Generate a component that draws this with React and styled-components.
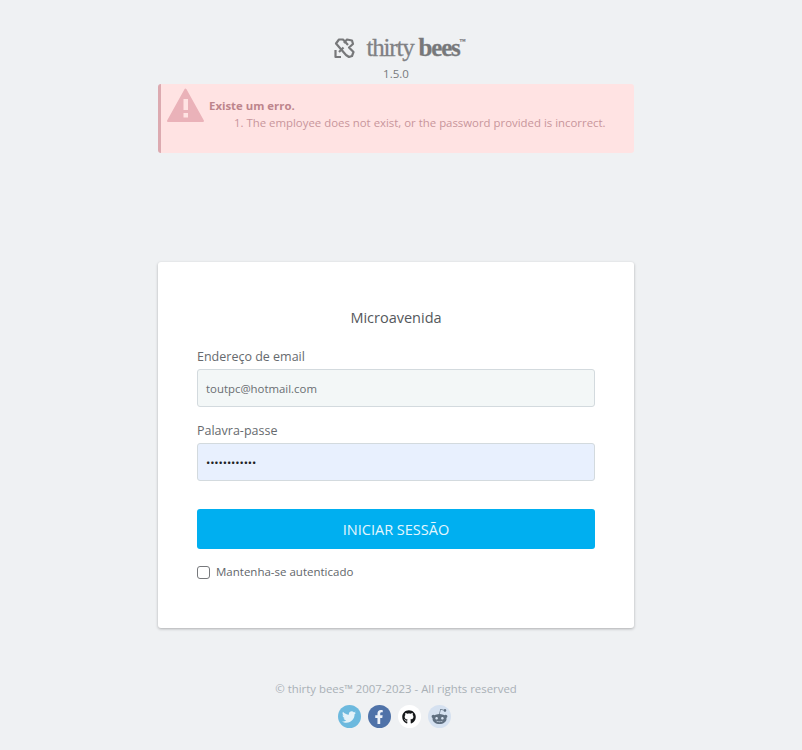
import React from "react";
import styled, { createGlobalStyle } from "styled-components";
import { FaTwitter, FaFacebookF, FaGithub, FaRedditAlien } from "react-icons/fa";

const GlobalStyle = createGlobalStyle`
  html, body {
    margin: 0;
    padding: 0;
    background: #eff1f3;
    font-family: "Open Sans", "Liberation Sans", sans-serif;
  }
  * { box-sizing: border-box; }
`;

const Page = styled.div`
  width: 792px;
  height: 750px;
  overflow: hidden;
  display: flex;
  flex-direction: column;
  align-items: center;
  padding-top: 36px;
`;

const Logo = styled.div`
  display: flex;
  align-items: center;
  height: 24px;
  gap: 12px;
  margin-left: 7px;
  color: #77787a;
`;

const LogoText = styled.div`
  font-family: "Liberation Serif", serif;
  font-size: 25px;
  line-height: 24px;
  letter-spacing: -1.2px;
  color: #808184;
  -webkit-text-stroke: 0.3px #808184;
  b {
    font-weight: 700;
    color: #77787a;
  }
  sup {
    font-size: 6px;
    vertical-align: 13px;
    line-height: 0;
    letter-spacing: 0;
  }
`;

const Version = styled.div`
  font-size: 11.5px;
  line-height: 16px;
  margin-top: 6px;
  color: #77797c;
`;

const Alert = styled.div`
  width: 476px;
  height: 69px;
  margin-top: 2px;
  display: flex;
  background: #ffe3e3;
  border-left: 3px solid #dcaab0;
  border-radius: 3px;
  padding: 0 0 0 6px;
`;

const AlertIcon = styled.svg`
  width: 37px;
  height: 34px;
  margin-top: 4px;
  flex: none;
`;

const AlertBody = styled.div`
  margin-left: 5px;
  padding-top: 13px;
  font-size: 11.4px;
  line-height: 17px;
  color: #c8959b;
  white-space: nowrap;
`;

const AlertTitle = styled.div`
  font-weight: 700;
  color: #bd858c;
`;

const AlertItem = styled.div`
  padding-left: 25px;
`;

const Card = styled.form`
  width: 476px;
  height: 366px;
  margin-top: 109px;
  padding: 45px 39px 0;
  background: #fff;
  border-radius: 3px;
  box-shadow: 0 1px 3px rgba(0, 0, 0, 0.28);
  display: flex;
  flex-direction: column;
`;

const ShopName = styled.div`
  text-align: center;
  font-size: 14.5px;
  line-height: 22px;
  color: #55585c;
`;

const Label = styled.label`
  display: block;
  font-size: 12.5px;
  line-height: 18px;
  color: #666a6e;
  margin-top: ${(p) => p.$top}px;
`;

const Field = styled.div`
  height: 38px;
  margin-top: 3px;
  padding: 0 8px;
  display: flex;
  align-items: center;
  font-size: 11.4px;
  color: ${(p) => (p.$filled ? "#202124" : "#6a6e72")};
  letter-spacing: ${(p) => (p.$filled ? "-0.1px" : "0")};
  background: ${(p) => (p.$filled ? "#e8f0fe" : "#f3f7f7")};
  border: 1px solid #d3dade;
  border-radius: 3px;
`;

const Submit = styled.button`
  height: 40px;
  margin-top: 28px;
  border: 0;
  border-radius: 3px;
  background: #00aff0;
  color: #e4f6fd;
  font-family: inherit;
  font-size: 14.5px;
`;

const Remember = styled.label`
  display: flex;
  align-items: center;
  gap: 6px;
  margin-top: 16px;
  font-size: 11.5px;
  line-height: 14px;
  color: #62666a;
`;

const Box = styled.span`
  width: 13px;
  height: 13px;
  border: 1px solid #77797c;
  border-radius: 3px;
  background: #fff;
`;

const Footer = styled.div`
  margin-top: 53px;
  font-size: 11.4px;
  line-height: 16px;
  color: #a9b0b6;
`;

const Socials = styled.div`
  display: flex;
  justify-content: center;
  gap: 7px;
  margin-top: 8px;
  margin-right: 4px;
`;

const Social = styled.a`
  width: 23px;
  height: 23px;
  border-radius: 50%;
  display: flex;
  align-items: center;
  justify-content: center;
  font-size: ${(p) => p.$size}px;
  color: ${(p) => p.$color};
  background: ${(p) => p.$bg};
`;

function BeeMark() {
  return (
    <svg width="21" height="21" viewBox="0 0 21 21" fill="none" stroke="currentColor" strokeWidth="2.2" strokeLinejoin="round">
      <path d="M10 5 L13 1.5 L18 2.5 L19 6 L15 9.5 L19.5 14 L18 18 L15 19 L12 17 L2 5.5 L5 1.5 L9 1.5 L14 7" />
      <path d="M1.5 12 V19 H7" />
      <path d="M5 14 L9.5 9.5" />
    </svg>
  );
}

export default function App() {
  return (
    <Page>
      <GlobalStyle />
      <Logo>
        <BeeMark />
        <LogoText>
          thirty <b>bees</b>
          <sup>™</sup>
        </LogoText>
      </Logo>
      <Version>1.5.0</Version>

      <Alert>
        <AlertIcon viewBox="0 0 37 34">
          <path d="M18.5 1.5 L36 33 L1 33 Z" fill="#eab2b9" stroke="#eab2b9" strokeWidth="2" strokeLinejoin="round" />
          <rect x="16.5" y="11" width="4.5" height="11" fill="#ffe3e3" />
          <rect x="16.5" y="25" width="4.5" height="4.5" fill="#ffe3e3" />
        </AlertIcon>
        <AlertBody>
          <AlertTitle>Existe um erro.</AlertTitle>
          <AlertItem>1. The employee does not exist, or the password provided is incorrect.</AlertItem>
        </AlertBody>
      </Alert>

      <Card>
        <ShopName>Microavenida</ShopName>
        <Label $top={19}>Endereço de email</Label>
        <Field>toutpc@hotmail.com</Field>
        <Label $top={15}>Palavra-passe</Label>
        <Field $filled>••••••••••••</Field>
        <Submit type="button">INICIAR SESSÃO</Submit>
        <Remember>
          <Box />
          Mantenha-se autenticado
        </Remember>
      </Card>

      <Footer>© thirty bees™ 2007-2023 - All rights reserved</Footer>
      <Socials>
        <Social $bg="#6cb9de" $color="#e3f2f9" $size={14}><FaTwitter /></Social>
        <Social $bg="#4f72a8" $color="#eef2f8" $size={14}><FaFacebookF /></Social>
        <Social $bg="#ffffff" $color="#16181a" $size={14}><FaGithub /></Social>
        <Social $bg="#d5e1f0" $color="#5f6f80" $size={17}><FaRedditAlien /></Social>
      </Socials>
    </Page>
  );
}
